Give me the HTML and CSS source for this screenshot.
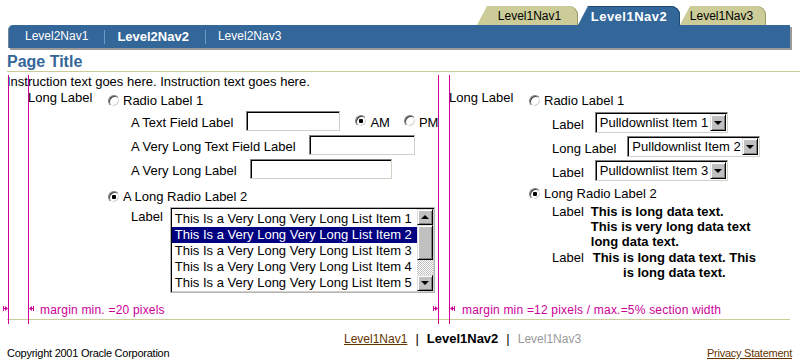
FILE: index.html
```html
<!DOCTYPE html>
<html lang="en">

<head>
    <meta charset="UTF-8">
    <meta name="viewport" content="width=device-width, initial-scale=1.0">
    <title>Page Title</title>
    <link rel="stylesheet" href="styles.css">
</head>

<body>
    <div class="page">
        <header class="masthead">
            <nav class="tabs">
                <a class="tab tab-first" href="#">Level1Nav1</a>
                <a class="tab tab-active" href="#">Level1Nav2</a>
                <a class="tab tab-last" href="#">Level1Nav3</a>
            </nav>
            <nav class="subnav">
                <a href="#">Level2Nav1</a>
                <span class="subnav-sep"></span>
                <a class="current" href="#">Level2Nav2</a>
                <span class="subnav-sep"></span>
                <a href="#">Level2Nav3</a>
            </nav>
        </header>

        <h1 class="page-title">Page Title</h1>

        <main class="content">
            <p class="instruction">Instruction text goes here. Instruction text goes here.</p>

            <div class="columns">
                <!-- left: text fields + list -->
                <section class="section section-left">
                    <div class="field-label">Long Label</div>
                    <div class="choices">
                        <label class="choice"><input class="radio" type="radio" name="left">Radio Label 1</label>
                        <div class="subrows">
                            <div class="row">
                                <span class="row-label">A Text Field Label</span>
                                <input class="text-field field-short" type="text">
                                <label class="option option-am"><input class="radio" type="radio" name="ampm" checked><span>AM</span></label>
                                <label class="option option-pm"><input class="radio" type="radio" name="ampm"><span>PM</span></label>
                            </div>
                            <div class="row">
                                <span class="row-label">A Very Long Text Field Label</span>
                                <input class="text-field field-mid" type="text">
                            </div>
                            <div class="row">
                                <span class="row-label">A Very Long Label</span>
                                <input class="text-field field-wide" type="text">
                            </div>
                        </div>
                        <label class="choice choice-second"><input class="radio" type="radio" name="left" checked>A Long Radio Label 2</label>
                        <div class="subrows">
                            <div class="row row-top">
                                <span class="row-label">Label</span>
                                <div class="listbox">
                                    <ul class="list">
                                        <li>This Is a Very Long Very Long List Item 1</li>
                                        <li class="selected">This Is a Very Long Very Long List Item 2</li>
                                        <li>This Is a Very Long Very Long List Item 3</li>
                                        <li>This Is a Very Long Very Long List Item 4</li>
                                        <li>This Is a Very Long Very Long List Item 5</li>
                                    </ul>
                                    <div class="scrollbar">
                                        <span class="sb-btn"><span class="arrow-up"></span></span>
                                        <span class="sb-btn sb-thumb"></span>
                                        <span class="sb-track"></span>
                                        <span class="sb-btn"><span class="arrow-down"></span></span>
                                    </div>
                                </div>
                            </div>
                        </div>
                    </div>
                </section>

                <!-- right: pulldowns + read only data -->
                <section class="section section-right">
                    <div class="field-label">Long Label</div>
                    <div class="choices">
                        <label class="choice"><input class="radio" type="radio" name="right">Radio Label 1</label>
                        <div class="subrows">
                            <div class="row">
                                <span class="row-label">Label</span>
                                <div class="select"><span class="select-text">Pulldownlist Item 1</span><span class="sb-btn"><span class="arrow-down"></span></span></div>
                            </div>
                            <div class="row">
                                <span class="row-label">Long Label</span>
                                <div class="select"><span class="select-text">Pulldownlist Item 2</span><span class="sb-btn"><span class="arrow-down"></span></span></div>
                            </div>
                            <div class="row">
                                <span class="row-label">Label</span>
                                <div class="select"><span class="select-text">Pulldownlist Item 3</span><span class="sb-btn"><span class="arrow-down"></span></span></div>
                            </div>
                        </div>
                        <label class="choice choice-second"><input class="radio" type="radio" name="right" checked>Long Radio Label 2</label>
                        <div class="data-rows">
                            <div class="data-row">
                                <span class="data-label">Label</span>
                                <span class="data-text">This is long data text.<br>This is very long data text long data text.</span>
                            </div>
                            <div class="data-row">
                                <span class="data-label">Label</span>
                                <span class="data-text data-text-center">This is long data text. This is long data text.</span>
                            </div>
                        </div>
                    </div>
                </section>
            </div>

            <div class="notes">
                <div class="note note-left">margin min. =20 pixels</div>
                <div class="note note-right">margin min =12 pixels / max.=5% section width</div>
            </div>
        </main>

        <footer class="footer">
            <div class="footer-nav"><a href="#">Level1Nav1</a><span class="sep">|</span><strong>Level1Nav2</strong><span class="sep">|</span><span class="disabled">Level1Nav3</span></div>
            <div class="footer-row">
                <span>Copyright 2001 Oracle Corporation</span>
                <a href="#">Privacy Statement</a>
            </div>
        </footer>

        <!-- margin guides drawn over the page -->
        <svg class="guides" width="800" height="250" viewBox="0 0 800 250">
            <g stroke="#cc0099" stroke-width="1" fill="none">
                <line x1="8.5" y1="0" x2="8.5" y2="249"/>
                <line x1="28.5" y1="0" x2="28.5" y2="249"/>
                <line x1="438.5" y1="0" x2="438.5" y2="249"/>
                <line x1="449.5" y1="0" x2="449.5" y2="249"/>
                <line x1="3.5" y1="231" x2="3.5" y2="236"/>
                <line x1="3" y1="233.5" x2="6" y2="233.5"/>
                <line x1="33.5" y1="231" x2="33.5" y2="236"/>
                <line x1="31" y1="233.5" x2="34" y2="233.5"/>
                <line x1="433.5" y1="231" x2="433.5" y2="236"/>
                <line x1="433" y1="233.5" x2="436" y2="233.5"/>
                <line x1="454.5" y1="231" x2="454.5" y2="236"/>
                <line x1="452" y1="233.5" x2="455" y2="233.5"/>
            </g>
            <g fill="#cc0099">
                <polygon points="5,231 8,233.5 5,236"/>
                <polygon points="32,231 29,233.5 32,236"/>
                <polygon points="435,231 438,233.5 435,236"/>
                <polygon points="453,231 450,233.5 453,236"/>
            </g>
        </svg>
    </div>
</body>

</html>
```

FILE: styles.css
```css
* {
    box-sizing: border-box;
}

body {
    margin: 0;
    background: #ffffff;
    color: #000000;
    font-family: "Liberation Sans", Arial, sans-serif;
    font-size: 13px;
}

.page {
    position: relative;
    width: 800px;
    height: 363px;
    overflow: hidden;
}

/* ---- global tabs ---- */
.masthead {
    padding-top: 6px;
}
.tabs {
    display: flex;
    justify-content: flex-end;
    height: 19px;
    padding-right: 34px;
}
.tab {
    display: block;
    height: 19px;
    padding-top: 2px;
    background: #cccc99;
    color: #000000;
    font-size: 12px;
    line-height: 17px;
    text-align: center;
    text-decoration: none;
    border-top-right-radius: 9px;
    clip-path: polygon(10px 0, 100% 0, 100% 100%, 0 100%);
    box-shadow: inset -1px 0 0 #999966;
}
.tab-first {
    width: 101px;
    padding-left: 4px;
}
.tab-active {
    width: 102px;
    background: #336699;
    color: #ffffff;
    font-size: 13px;
    font-weight: bold;
    letter-spacing: .5px;
    box-shadow: inset 0 1px 0 #1f4a75, inset -1px 0 0 #1f4a75;
}
.tab-last {
    width: 86px;
    padding-right: 3px;
}

/* ---- level 2 bar ---- */
.subnav {
    display: flex;
    align-items: center;
    height: 23px;
    margin: 0 10px 0 8px;
    padding-left: 16px;
    background: #336699;
    border-left: 1px solid #71849a;
    border-top-left-radius: 5px;
    box-shadow: 2px 2px 0 #9a9a9a;
    font-size: 12px;
    line-height: 15px;
}
.subnav a {
    color: #ffffff;
    text-decoration: none;
}
.subnav .current {
    font-size: 13px;
    font-weight: bold;
}
.subnav-sep {
    width: 1px;
    height: 14px;
    margin: 0 12px 0 16px;
    background: #6f9bc8;
}

.page-title {
    margin: 5px 0 0 7px;
    color: #336699;
    font-size: 16px;
    line-height: 18px;
    border-bottom: 1px solid #cccc99;
}

/* ---- content ---- */
.content {
    padding-left: 8px;
}
.instruction {
    margin: 2px 0 0 -1px;
    line-height: 15px;
}
.columns,
.notes {
    display: grid;
    grid-template-columns: 430px 1fr;
}
.columns {
    margin-top: 4px;
}

.section {
    display: flex;
    align-items: flex-start;
}
.section-left {
    padding-left: 20px;
}
.section-right {
    padding-left: 11px;
}
.field-label {
    flex: none;
    width: 80px;
    margin-top: -3px;
    line-height: 16px;
}
.choices {
    display: flex;
    flex-direction: column;
    align-items: flex-start;
}
.choice {
    display: flex;
    align-items: center;
    height: 16px;
    line-height: 16px;
    white-space: nowrap;
}
.section-left .choice-second {
    margin-top: 10px;
}
.section-right .choice-second {
    margin-top: 5px;
}

.radio {
    flex: none;
    width: 12px;
    height: 12px;
    margin: 0 3px 0 0;
    -webkit-appearance: none;
    appearance: none;
    background: #ffffff;
    border: 1px solid;
    border-color: #808080 #ffffff #ffffff #808080;
    border-radius: 50%;
    box-shadow: inset 1px 1px 0 #404040, inset -1px -1px 0 #d4d0c8;
}
.radio:checked {
    background: radial-gradient(circle, #000000 0 2px, #ffffff 2.5px);
}

.subrows {
    display: flex;
    flex-direction: column;
    gap: 4px;
    margin: 2px 0 0 23px;
}
.section-right .subrows {
    gap: 3px;
    margin-top: 3px;
}
.row {
    display: flex;
    align-items: center;
    height: 20px;
    white-space: nowrap;
}
.section-right .row {
    height: 21px;
}
.row-label {
    padding-top: 3px;
    line-height: 15px;
}
.row-top {
    align-items: flex-start;
    height: auto;
}
.row-top .row-label {
    padding-top: 2px;
}

.text-field {
    height: 20px;
    margin: 0 0 0 13px;
    padding: 0;
    background: #ffffff;
    border: 1px solid;
    border-color: #808080 #d4d0c8 #d4d0c8 #808080;
    box-shadow: inset 1px 1px 0 #000000;
    font: inherit;
}
.field-short {
    width: 94px;
}
.field-mid {
    width: 106px;
}
.field-wide {
    width: 142px;
}

.option {
    display: flex;
    align-items: center;
}
.option span {
    padding-top: 3px;
    line-height: 15px;
}
.option-am {
    margin-left: 15px;
}
.option-pm {
    margin-left: 14px;
}

/* ---- list box ---- */
.listbox {
    display: flex;
    width: 265px;
    height: 86px;
    margin-left: 7px;
    padding: 1px;
    background: #ffffff;
    border: 1px solid #b4b4b4;
    box-shadow: inset 1px 1px 0 #000000, inset -1px -1px 0 #d4d0c8;
}
.list {
    flex: 1;
    margin: 0;
    padding: 2px 0 0;
    list-style: none;
    overflow: hidden;
}
.list li {
    height: 16px;
    padding-left: 3px;
    line-height: 16px;
}
.list .selected {
    background: #000080;
    color: #ffffff;
}
.scrollbar {
    display: flex;
    flex: none;
    flex-direction: column;
    width: 16px;
}
.sb-btn {
    display: flex;
    flex: none;
    align-items: center;
    justify-content: center;
    width: 16px;
    height: 16px;
    background: #c0c0c0;
    border: 1px solid;
    border-color: #dfdfdf #000000 #000000 #dfdfdf;
    box-shadow: inset 1px 1px 0 #ffffff, inset -1px -1px 0 #808080;
}
.sb-thumb {
    height: 35px;
}
.sb-track {
    flex: 1;
    background: repeating-conic-gradient(#c0c0c0 0 25%, #ffffff 0 50%) 0 0 / 2px 2px;
}
.arrow-up,
.arrow-down {
    width: 0;
    height: 0;
    border-left: 4px solid transparent;
    border-right: 4px solid transparent;
}
.arrow-up {
    border-bottom: 4px solid #000000;
}
.arrow-down {
    border-top: 4px solid #000000;
}

/* ---- pulldowns ---- */
.select {
    display: flex;
    align-items: center;
    width: 133px;
    height: 21px;
    margin-left: 11px;
    padding: 1px;
    background: #ffffff;
    border: 1px solid;
    border-color: #808080 #d4d0c8 #d4d0c8 #808080;
    box-shadow: inset 1px 1px 0 #000000;
}
.select-text {
    flex: 1;
    padding-left: 3px;
    line-height: 15px;
}
.select .sb-btn {
    height: 17px;
}

/* ---- read only data ---- */
.data-rows {
    margin: 2px 0 0 23px;
}
.data-row {
    display: flex;
    align-items: flex-start;
    line-height: 15px;
}
.data-row + .data-row {
    margin-top: 1px;
}
.data-text {
    width: 167px;
    margin-left: 7px;
    font-weight: bold;
}
.data-text-center {
    text-align: center;
}

/* ---- guide notes ---- */
.notes {
    margin-top: 10px;
    color: #cc0099;
    font-size: 12px;
    line-height: 14px;
    letter-spacing: .2px;
}
.note-left {
    padding-left: 32px;
}
.note-right {
    padding-left: 24px;
}
.guides {
    position: absolute;
    top: 75px;
    left: 0;
}

/* ---- footer ---- */
.footer {
    margin: 2px 10px 0 7px;
    border-top: 1px solid #cccc99;
}
.footer a {
    color: #663300;
}
.footer-nav {
    padding: 11px 0 0 337px;
    font-size: 12px;
    line-height: 15px;
}
.footer-nav strong {
    font-size: 13px;
}
.footer-nav .sep {
    margin: 0 8px;
    font-size: 13px;
}
.footer-nav .disabled {
    color: #999999;
}
.footer-row {
    display: flex;
    justify-content: space-between;
    margin-right: -2px;
    font-size: 11px;
    line-height: 13px;
    letter-spacing: -.25px;
}
```
